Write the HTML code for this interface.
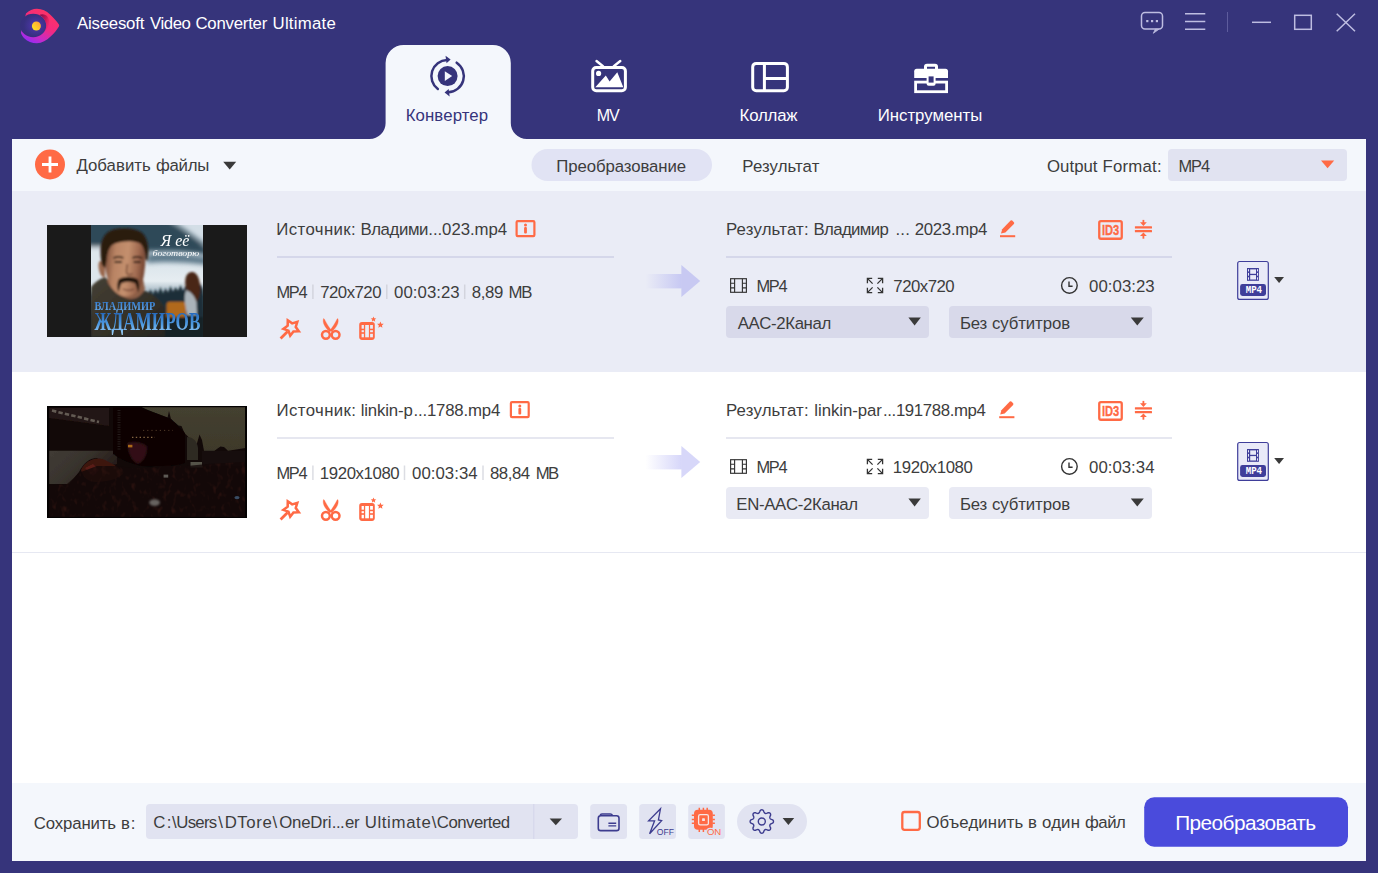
<!DOCTYPE html>
<html lang="ru">
<head>
<meta charset="utf-8">
<title>Aiseesoft Video Converter Ultimate</title>
<style>
*{box-sizing:border-box;margin:0;padding:0}
html,body{width:1378px;height:873px;overflow:hidden;background:#36347b}
body{font-family:"Liberation Sans", sans-serif;font-size:16.8px;color:#3d3d3d;position:relative}
.t{position:absolute;white-space:nowrap;line-height:20px;height:20px}
.b{position:absolute}
#art{position:absolute;left:0;top:0;width:1378px;height:873px}
svg text{font-family:"Liberation Sans", sans-serif}
</style>
</head>
<body>
<div class="b" style="left:12px;top:139px;width:1354px;height:722px;background:#fff"></div>
<div class="b" style="left:12px;top:139px;width:1354px;height:52px;background:#f4f7fc"></div>
<div class="b" style="left:12px;top:191px;width:1354px;height:181px;background:#eaecf6"></div>
<div class="b" style="left:12px;top:552px;width:1354px;height:1px;background:#e6e8f2"></div>
<div class="b" style="left:12px;top:783px;width:1354px;height:78px;background:#f4f7fc"></div>
<svg id="art" width="1378" height="873" viewBox="0 0 1378 873">
<defs>
<linearGradient id="lgA" x1="0.75" y1="0" x2="0.15" y2="1"><stop offset="0" stop-color="#ff3560"/><stop offset="0.45" stop-color="#f32a80"/><stop offset="0.75" stop-color="#c62bc8"/><stop offset="1" stop-color="#8a2bff"/></linearGradient>
<linearGradient id="lgD" x1="0" y1="0" x2="1" y2="0.6"><stop offset="0" stop-color="#6a0a4c"/><stop offset="0.6" stop-color="#b8104e" stop-opacity="0.75"/><stop offset="1" stop-color="#e01a5a" stop-opacity="0.1"/></linearGradient>
<radialGradient id="lgB" cx="0.6" cy="0.5" r="0.62"><stop offset="0" stop-color="#5b3cb4"/><stop offset="0.35" stop-color="#45349a"/><stop offset="0.75" stop-color="#37307f"/><stop offset="1" stop-color="#352f7c"/></radialGradient>
<linearGradient id="lgC" x1="1" y1="0" x2="0" y2="1"><stop offset="0" stop-color="#ff9a3a"/><stop offset="1" stop-color="#ffee20"/></linearGradient>
<linearGradient id="arr" x1="0" y1="0" x2="1" y2="0"><stop offset="0" stop-color="#6e6eeb" stop-opacity="0"/><stop offset="1" stop-color="#6e6eeb" stop-opacity="0.28"/></linearGradient>
<linearGradient id="sky" x1="0" y1="0" x2="0" y2="1"><stop offset="0" stop-color="#3d5668"/><stop offset="0.3" stop-color="#8fa6b6"/><stop offset="0.5" stop-color="#dfe8ee"/><stop offset="0.62" stop-color="#a9bcc8"/><stop offset="0.75" stop-color="#2f4654"/><stop offset="1" stop-color="#1d2a33"/></linearGradient>
<linearGradient id="nm" x1="0" y1="0" x2="0" y2="1"><stop offset="0" stop-color="#2f7fd0"/><stop offset="1" stop-color="#9fd4ff"/></linearGradient>
<linearGradient id="skin" x1="0" y1="0" x2="1" y2="0"><stop offset="0" stop-color="#8d5a40"/><stop offset="0.45" stop-color="#c08a68"/><stop offset="1" stop-color="#9a6248"/></linearGradient>

<filter id="b1" x="-20%" y="-20%" width="140%" height="140%"><feGaussianBlur stdDeviation="1"/></filter>
<filter id="b2" x="-20%" y="-20%" width="140%" height="140%"><feGaussianBlur stdDeviation="2.4"/></filter>
<filter id="b05" x="-20%" y="-20%" width="140%" height="140%"><feGaussianBlur stdDeviation="0.5"/></filter>
<filter id="b03" x="-20%" y="-20%" width="140%" height="140%"><feGaussianBlur stdDeviation="0.35"/></filter>
<filter id="crowd" x="0" y="0" width="100%" height="100%" color-interpolation-filters="sRGB"><feTurbulence type="fractalNoise" baseFrequency="0.2 0.13" numOctaves="2" seed="7" result="n"/><feColorMatrix in="n" type="matrix" values="0 0 0 0 0.22  0 0 0 0 0.09  0 0 0 0 0.07  1.8 0 0 0 -0.98"/></filter>
<filter id="hairn" x="0" y="0" width="100%" height="100%" color-interpolation-filters="sRGB"><feTurbulence type="fractalNoise" baseFrequency="0.5 0.2" numOctaves="2" seed="3" result="n"/><feColorMatrix in="n" type="matrix" values="0 0 0 0 0.42  0 0 0 0 0.25  0 0 0 0 0.16  1.8 0 0 0 -0.8"/><feComposite in2="SourceGraphic" operator="in"/></filter>
<clipPath id="c1"><rect x="44.1" y="0" width="111.9" height="112"/></clipPath>
<clipPath id="c2"><rect x="2.2" y="1.2" width="195.8" height="109.6"/></clipPath>
<clipPath id="c3"><path d="M0 80 L20 78 L34 66 L50 60 L70 60 L84 62 L100 62 L120 60 L140 60 L160 58 L200 56 V112 H0Z"/></clipPath>
<linearGradient id="sk1" x1="0" y1="0" x2="0" y2="1"><stop offset="0" stop-color="#32505f"/><stop offset="0.17" stop-color="#3d5b6b"/><stop offset="0.25" stop-color="#b9c9d4"/><stop offset="0.31" stop-color="#d9e3ea"/><stop offset="0.5" stop-color="#e6edf1"/><stop offset="0.58" stop-color="#aebfca"/><stop offset="0.64" stop-color="#3a5563"/><stop offset="0.8" stop-color="#1f323c"/><stop offset="1" stop-color="#141c21"/></linearGradient>
<linearGradient id="nm1" x1="0" y1="0" x2="0" y2="1"><stop offset="0.15" stop-color="#2466ba"/><stop offset="0.6" stop-color="#4f9be2"/><stop offset="1" stop-color="#a8d6fb"/></linearGradient>
<linearGradient id="nm2" x1="0" y1="0" x2="0" y2="1"><stop offset="0.2" stop-color="#337cd0"/><stop offset="1" stop-color="#6fb0ec"/></linearGradient>
<linearGradient id="face" x1="0" y1="0" x2="1" y2="0.15"><stop offset="0" stop-color="#6f4230"/><stop offset="0.3" stop-color="#b98464"/><stop offset="0.6" stop-color="#c4906e"/><stop offset="0.85" stop-color="#a06a50"/><stop offset="1" stop-color="#7a4a36"/></linearGradient>
<linearGradient id="jack" x1="0" y1="0" x2="1" y2="1"><stop offset="0" stop-color="#453f33"/><stop offset="1" stop-color="#272520"/></linearGradient>
<linearGradient id="scr" x1="0" y1="0" x2="1" y2="0.5"><stop offset="0" stop-color="#403b35"/><stop offset="0.5" stop-color="#38332d"/><stop offset="1" stop-color="#241a17"/></linearGradient>
<linearGradient id="sky2" x1="0" y1="0" x2="0" y2="1"><stop offset="0" stop-color="#444030"/><stop offset="1" stop-color="#3e392b"/></linearGradient>
</defs>
<path d="M369.6 139 A16 16 0 0 0 385.6 123 V63 A18 18 0 0 1 403.6 45 H492.8 A18 18 0 0 1 510.8 63 V123 A16 16 0 0 0 526.8 139 Z" fill="#f4f7fc"/>
<g>
<path d="M26 13.4 C29 10.5 33 8.7 36.9 8.7 C42 8.7 46.5 11 49.8 14.2 C53.6 17.8 57.2 21.6 58.9 24.4 Q59.5 25.4 58.9 26.4 C57 29.8 53.8 33.6 50.6 36.6 C46.5 40.6 42 43.2 36.9 43.2 C32 43.2 27.5 41.5 24.5 38.5 C22.8 36.8 21.5 34.8 20.9 32.7 Z" fill="url(#lgA)"/>
<ellipse cx="33.2" cy="25.5" rx="13" ry="11.8" fill="url(#lgB)"/>
<path d="M39.4 15.1 A13 11.8 0 0 1 44.4 31.6 C48.6 28.4 51 22 47.8 17 C45.8 14.2 42 13.6 39.4 15.1Z" fill="url(#lgD)"/>
<circle cx="36.4" cy="26" r="4.5" fill="url(#lgC)"/>
</g>
<g fill="none" stroke="#bebde1" stroke-width="1.5">
<rect x="1141.5" y="12.5" width="21" height="16.5" rx="3.5"/>
<path d="M1185 13.8H1205.3M1185 21.6H1205.3M1185 29.2H1205.3"/>
<path d="M1252 22.3H1271"/>
<rect x="1294.7" y="15.3" width="16.6" height="14"/>
<path d="M1336.7 13.7L1355 31.2M1355 13.7L1336.7 31.2"/>
</g>
<path d="M1159 29.2L1153.3 33.3L1155.3 29.2Z" fill="#bebde1" stroke="#bebde1" stroke-width="0.8"/>
<g fill="#bebde1"><rect x="1146.2" y="20" width="2.2" height="2.2"/><rect x="1151" y="20" width="2.2" height="2.2"/><rect x="1155.8" y="20" width="2.2" height="2.2"/></g>
<rect x="1227" y="12" width="1" height="20" fill="#5e5c9d"/>
<g fill="none" stroke="#36347b" stroke-width="2.5" stroke-linecap="round">
<path d="M437.85 89.04 A16.2 16.2 0 0 1 447.03 59.91"/>
<path d="M456.66 62.67 A16.2 16.2 0 0 1 448.17 92.29"/>
</g>
<path d="M445.53 55.71 L450.63 59.61 L446.53 63.31Z" fill="#36347b"/>
<path d="M449.67 96.49 L444.57 92.59 L448.67 88.89Z" fill="#36347b"/>
<circle cx="447.6" cy="76.1" r="10" fill="#36347b"/>
<path d="M444.8 71.3 L452.20000000000005 76.1 L444.8 80.89999999999999Z" fill="#f4f7fc"/>
<g fill="none" stroke="#fff">
<rect x="592.7" y="67.5" width="32.7" height="23.2" rx="3.5" stroke-width="3"/>
<path d="M596.5 61L603 66.3M620.3 61L613.8 66.3" stroke-width="2.4" stroke-linecap="round"/>
</g>
<circle cx="598.6" cy="73.4" r="2.6" fill="#fff"/>
<path d="M595.3 87.2L605.8 75.6L609.6 81.4L617.3 72.3L623.3 87.2Z" fill="#fff"/>
<g fill="none" stroke="#fff" stroke-width="3">
<rect x="752.7" y="63.4" width="34.7" height="27.3" rx="3.5"/>
<path d="M764.4 63.4V90.7M764.4 78.4H787.4"/>
</g>
<g>
<path d="M925.5 70 V66.6 Q925.5 65.2 927 65.2 H935 Q936.5 65.2 936.5 66.6 V70" fill="none" stroke="#fff" stroke-width="3"/>
<path d="M914.2 71.3 Q914.2 68.8 916.7 68.8 H945.5 Q948 68.8 948 71.3 V78 H914.2Z" fill="#fff"/>
<rect x="915.6" y="82.1" width="31" height="9.6" fill="none" stroke="#fff" stroke-width="2.8"/>
<rect x="926.6" y="75.4" width="9" height="10.4" rx="2" fill="#fff"/>
<rect x="928.6" y="76.4" width="5" height="6.2" fill="#36347b"/>
</g>
<circle cx="50" cy="164.5" r="15" fill="#ff6a45"/><path d="M42 164.5H58M50 156.5V172.5" stroke="#fff" stroke-width="2.8"/>
<path d="M223.2 161.8H236.2L229.7 169.4Z" fill="#3a3a3a"/>
<rect x="531.5" y="149" width="180.5" height="32" rx="16" fill="#e1e3f4" />
<rect x="1168" y="149" width="179" height="32" rx="4" fill="#e1e3f1" />
<path d="M1321 160.6H1334.2L1327.6 168.3Z" fill="#ff6a45"/>
<rect x="277" y="256" width="337" height="2" rx="0" fill="#d5d7ea" />
<rect x="726" y="256" width="446" height="2" rx="0" fill="#d5d7ea" />
<g transform="translate(0,0)"><rect x="645.5" y="274" width="35.9" height="14.4" fill="url(#arr)"/><path d="M681.4 265L700.2 281L681.4 297Z" fill="#6e6eeb" fill-opacity="0.28"/></g>
<polygon points="298.81,331.32 293.45,331.43 290.22,335.70 288.46,330.64 283.40,328.88 287.67,325.65 287.78,320.29 292.17,323.35 297.30,321.80 295.75,326.93" fill="none" stroke="#ff6a45" stroke-width="2.55" stroke-linejoin="miter"/>
<path d="M280.6 338.5L287.6 331.5" stroke="#ff6a45" stroke-width="2.7" stroke-linecap="butt"/>
<g transform="translate(0,0)" fill="none" stroke="#ff6a45">
<circle cx="325.9" cy="334.8" r="3.9" stroke-width="2.5"/><circle cx="335.6" cy="334.8" r="3.9" stroke-width="2.5"/>
<path d="M323.5 318.6 C322.3 322.4 324.4 327.2 329.7 331.7 L331.5 330.6 C328.8 327 326.2 323 324.3 319Z" fill="#ff6a45" stroke-width="0.3"/>
<path d="M337.9 318.6 C339.1 322.4 337 327.2 331.7 331.7 L329.9 330.6 C332.6 327 335.2 323 337.1 319Z" fill="#ff6a45" stroke-width="0.3"/>
</g>
<g transform="translate(0,0)"><rect x="359.2" y="322.1" width="15.6" height="17.8" rx="2.8" fill="#ff6a45"/><rect x="365.2" y="325" width="3.7" height="12.3" fill="#eaecf6"/><rect x="361.6" y="325" width="2.3" height="3.7" fill="#eaecf6"/><rect x="370.1" y="325" width="2.8" height="3.7" fill="#eaecf6"/><rect x="361.6" y="330.2" width="2.3" height="2" fill="#eaecf6"/><rect x="370.1" y="330.2" width="2.8" height="2" fill="#eaecf6"/><rect x="361.6" y="333.8" width="2.3" height="3.5" fill="#eaecf6"/><rect x="370.1" y="333.8" width="2.8" height="3.5" fill="#eaecf6"/><polygon points="373.50,316.40 374.27,318.24 376.26,318.40 374.74,319.70 375.20,321.65 373.50,320.61 371.80,321.65 372.26,319.70 370.74,318.40 372.73,318.24" fill="#ff6a45"/><polygon points="380.40,321.40 381.33,323.63 383.73,323.82 381.90,325.39 382.46,327.73 380.40,326.47 378.34,327.73 378.90,325.39 377.07,323.82 379.47,323.63" fill="#ff6a45"/></g>
<g transform="translate(0,0)"><rect x="516.6" y="221.1" width="17.8" height="15" rx="1.1" fill="none" stroke="#ff6a45" stroke-width="2.2"/><rect x="524.1" y="227" width="2.8" height="6.6" rx="1" fill="#ff6a45"/><circle cx="525.5" cy="225" r="1.5" fill="#ff6a45"/></g>
<g transform="translate(0,0)" fill="#ff6a45"><rect x="1000" y="235.2" width="15.2" height="2"/><path d="M1001 233.6L1002.2 229.3L1010.6 220.6Q1011.4 219.9 1012.2 220.6L1013.9 222.3Q1014.6 223.1 1013.9 223.9L1005.4 232.5Z"/></g>
<g transform="translate(0,0)"><rect x="1099.25" y="221.05" width="22.5" height="17.7" rx="1.7" fill="none" stroke="#ff6a45" stroke-width="2.3"/><text x="1101.9" y="234.9" font-size="14.4" font-weight="bold" fill="#ff6a45" stroke="#ff6a45" stroke-width="0.35" textLength="17.3" lengthAdjust="spacingAndGlyphs">ID3</text></g>
<g transform="translate(0,0)" fill="#ff6a45"><rect x="1134.9" y="226.25" width="17.1" height="2.2" rx="0.5"/><rect x="1134.9" y="229.95" width="17.1" height="2.2" rx="0.5"/><rect x="1142.5" y="219.9" width="1.8" height="4"/><path d="M1140 222.3H1146.8L1143.4 225.9Z"/><rect x="1142.5" y="234.6" width="1.8" height="4.1"/><path d="M1140 236H1146.8L1143.4 232.4Z"/></g>
<g transform="translate(0,0)" fill="none" stroke="#333" stroke-width="1.15"><rect x="730.6" y="278.7" width="15.8" height="13.6"/><path d="M734.6 278.7V292.3M742.4 278.7V292.3M730.6 283.2H734.6M730.6 287.8H734.6M742.4 283.2H746.4M742.4 287.8H746.4"/></g>
<g transform="translate(0,0)" fill="none" stroke="#333" stroke-width="1.3"><path d="M867.4 283.2V278.4H872.2M867.4 278.4L872.6 283.6M877.8 278.4H882.6V283.2M882.6 278.4L877.4 283.6M867.4 287.8V292.6H872.2M867.4 292.6L872.6 287.4M877.8 292.6H882.6V287.8M882.6 292.6L877.4 287.4"/></g>
<g transform="translate(0,0)" fill="none" stroke="#333" stroke-width="1.4"><circle cx="1069.4" cy="285.4" r="7.8"/><path d="M1069 281.6V286.3H1072.6"/></g>
<rect x="726" y="306" width="203" height="32" rx="4" fill="#d8d9ea" />
<rect x="949" y="306" width="203" height="32" rx="4" fill="#d8d9ea" />
<path d="M908.4 317.6H920.8L914.5999999999999 325.4Z" fill="#3a3a3a"/>
<path d="M1130.8 317.6H1143.8L1137.3 325.4Z" fill="#3a3a3a"/>
<g transform="translate(0,0)">
<rect x="1237.7" y="261.5" width="30.6" height="37.9" rx="2" fill="#e9eaf8" stroke="#3f3e9a" stroke-width="1.2"/>
<rect x="1240.1" y="284.1" width="25.9" height="11.8" rx="2.4" fill="#3f3e9a"/>
<rect x="1247" y="268" width="11.9" height="12.8" fill="#3f3e9a"/>
<rect x="1250.2" y="269.4" width="5.8" height="4.4" fill="#e9eaf8"/><rect x="1250.2" y="275.1" width="5.8" height="4.4" fill="#e9eaf8"/><rect x="1248" y="269.2" width="1" height="2.2" fill="#e9eaf8"/><rect x="1257" y="269.2" width="1" height="2.2" fill="#e9eaf8"/><rect x="1248" y="272.9" width="1" height="2.8" fill="#e9eaf8"/><rect x="1257" y="272.9" width="1" height="2.8" fill="#e9eaf8"/><rect x="1248" y="277.3" width="1" height="2.4" fill="#e9eaf8"/><rect x="1257" y="277.3" width="1" height="2.4" fill="#e9eaf8"/>
<text x="1253.9" y="293.1" text-anchor="middle" font-size="10.4" font-weight="bold" fill="#fff" style="font-family:'Liberation Mono',monospace" textLength="16.4" lengthAdjust="spacingAndGlyphs">MP4</text>
</g>
<path d="M1274.2 277.1H1284L1279.1 283.1Z" fill="#3a3a3a"/>
<rect x="277" y="437" width="337" height="2" rx="0" fill="#e6e7f0" />
<rect x="726" y="437" width="446" height="2" rx="0" fill="#e6e7f0" />
<g transform="translate(0,181)"><rect x="645.5" y="274" width="35.9" height="14.4" fill="url(#arr)"/><path d="M681.4 265L700.2 281L681.4 297Z" fill="#6e6eeb" fill-opacity="0.28"/></g>
<polygon points="298.81,512.32 293.45,512.43 290.22,516.70 288.46,511.64 283.40,509.88 287.67,506.65 287.78,501.29 292.17,504.35 297.30,502.80 295.75,507.93" fill="none" stroke="#ff6a45" stroke-width="2.55" stroke-linejoin="miter"/>
<path d="M280.6 519.5L287.6 512.5" stroke="#ff6a45" stroke-width="2.7" stroke-linecap="butt"/>
<g transform="translate(0,181)" fill="none" stroke="#ff6a45">
<circle cx="325.9" cy="334.8" r="3.9" stroke-width="2.5"/><circle cx="335.6" cy="334.8" r="3.9" stroke-width="2.5"/>
<path d="M323.5 318.6 C322.3 322.4 324.4 327.2 329.7 331.7 L331.5 330.6 C328.8 327 326.2 323 324.3 319Z" fill="#ff6a45" stroke-width="0.3"/>
<path d="M337.9 318.6 C339.1 322.4 337 327.2 331.7 331.7 L329.9 330.6 C332.6 327 335.2 323 337.1 319Z" fill="#ff6a45" stroke-width="0.3"/>
</g>
<g transform="translate(0,181)"><rect x="359.2" y="322.1" width="15.6" height="17.8" rx="2.8" fill="#ff6a45"/><rect x="365.2" y="325" width="3.7" height="12.3" fill="#ffffff"/><rect x="361.6" y="325" width="2.3" height="3.7" fill="#ffffff"/><rect x="370.1" y="325" width="2.8" height="3.7" fill="#ffffff"/><rect x="361.6" y="330.2" width="2.3" height="2" fill="#ffffff"/><rect x="370.1" y="330.2" width="2.8" height="2" fill="#ffffff"/><rect x="361.6" y="333.8" width="2.3" height="3.5" fill="#ffffff"/><rect x="370.1" y="333.8" width="2.8" height="3.5" fill="#ffffff"/><polygon points="373.50,316.40 374.27,318.24 376.26,318.40 374.74,319.70 375.20,321.65 373.50,320.61 371.80,321.65 372.26,319.70 370.74,318.40 372.73,318.24" fill="#ff6a45"/><polygon points="380.40,321.40 381.33,323.63 383.73,323.82 381.90,325.39 382.46,327.73 380.40,326.47 378.34,327.73 378.90,325.39 377.07,323.82 379.47,323.63" fill="#ff6a45"/></g>
<g transform="translate(0,181)"><rect x="510.90000000000003" y="221.1" width="17.8" height="15" rx="1.1" fill="none" stroke="#ff6a45" stroke-width="2.2"/><rect x="518.4" y="227" width="2.8" height="6.6" rx="1" fill="#ff6a45"/><circle cx="519.8" cy="225" r="1.5" fill="#ff6a45"/></g>
<g transform="translate(-0.7999999999999545,181)" fill="#ff6a45"><rect x="1000" y="235.2" width="15.2" height="2"/><path d="M1001 233.6L1002.2 229.3L1010.6 220.6Q1011.4 219.9 1012.2 220.6L1013.9 222.3Q1014.6 223.1 1013.9 223.9L1005.4 232.5Z"/></g>
<g transform="translate(0,181)"><rect x="1099.25" y="221.05" width="22.5" height="17.7" rx="1.7" fill="none" stroke="#ff6a45" stroke-width="2.3"/><text x="1101.9" y="234.9" font-size="14.4" font-weight="bold" fill="#ff6a45" stroke="#ff6a45" stroke-width="0.35" textLength="17.3" lengthAdjust="spacingAndGlyphs">ID3</text></g>
<g transform="translate(0,181)" fill="#ff6a45"><rect x="1134.9" y="226.25" width="17.1" height="2.2" rx="0.5"/><rect x="1134.9" y="229.95" width="17.1" height="2.2" rx="0.5"/><rect x="1142.5" y="219.9" width="1.8" height="4"/><path d="M1140 222.3H1146.8L1143.4 225.9Z"/><rect x="1142.5" y="234.6" width="1.8" height="4.1"/><path d="M1140 236H1146.8L1143.4 232.4Z"/></g>
<g transform="translate(0,181)" fill="none" stroke="#333" stroke-width="1.15"><rect x="730.6" y="278.7" width="15.8" height="13.6"/><path d="M734.6 278.7V292.3M742.4 278.7V292.3M730.6 283.2H734.6M730.6 287.8H734.6M742.4 283.2H746.4M742.4 287.8H746.4"/></g>
<g transform="translate(0,181)" fill="none" stroke="#333" stroke-width="1.3"><path d="M867.4 283.2V278.4H872.2M867.4 278.4L872.6 283.6M877.8 278.4H882.6V283.2M882.6 278.4L877.4 283.6M867.4 287.8V292.6H872.2M867.4 292.6L872.6 287.4M877.8 292.6H882.6V287.8M882.6 292.6L877.4 287.4"/></g>
<g transform="translate(0,181)" fill="none" stroke="#333" stroke-width="1.4"><circle cx="1069.4" cy="285.4" r="7.8"/><path d="M1069 281.6V286.3H1072.6"/></g>
<rect x="726" y="487" width="203" height="32" rx="4" fill="#e9eaf4" />
<rect x="949" y="487" width="203" height="32" rx="4" fill="#e9eaf4" />
<path d="M908.4 498.6H920.8L914.5999999999999 506.4Z" fill="#3a3a3a"/>
<path d="M1130.8 498.6H1143.8L1137.3 506.4Z" fill="#3a3a3a"/>
<g transform="translate(0,181)">
<rect x="1237.7" y="261.5" width="30.6" height="37.9" rx="2" fill="#e9eaf8" stroke="#3f3e9a" stroke-width="1.2"/>
<rect x="1240.1" y="284.1" width="25.9" height="11.8" rx="2.4" fill="#3f3e9a"/>
<rect x="1247" y="268" width="11.9" height="12.8" fill="#3f3e9a"/>
<rect x="1250.2" y="269.4" width="5.8" height="4.4" fill="#e9eaf8"/><rect x="1250.2" y="275.1" width="5.8" height="4.4" fill="#e9eaf8"/><rect x="1248" y="269.2" width="1" height="2.2" fill="#e9eaf8"/><rect x="1257" y="269.2" width="1" height="2.2" fill="#e9eaf8"/><rect x="1248" y="272.9" width="1" height="2.8" fill="#e9eaf8"/><rect x="1257" y="272.9" width="1" height="2.8" fill="#e9eaf8"/><rect x="1248" y="277.3" width="1" height="2.4" fill="#e9eaf8"/><rect x="1257" y="277.3" width="1" height="2.4" fill="#e9eaf8"/>
<text x="1253.9" y="293.1" text-anchor="middle" font-size="10.4" font-weight="bold" fill="#fff" style="font-family:'Liberation Mono',monospace" textLength="16.4" lengthAdjust="spacingAndGlyphs">MP4</text>
</g>
<path d="M1274.2 458.1H1284L1279.1 464.1Z" fill="#3a3a3a"/>
<rect x="312.15" y="284.5" width="1.5" height="14.5" rx="0" fill="#d3d4dd" />
<rect x="386.05" y="284.5" width="1.5" height="14.5" rx="0" fill="#d3d4dd" />
<rect x="463.95" y="284.5" width="1.5" height="14.5" rx="0" fill="#d3d4dd" />
<rect x="312.15" y="465.5" width="1.5" height="14.5" rx="0" fill="#dcdde3" />
<rect x="403.75" y="465.5" width="1.5" height="14.5" rx="0" fill="#dcdde3" />
<rect x="482.25" y="465.5" width="1.5" height="14.5" rx="0" fill="#dcdde3" />
<g transform="translate(47,225)">
<rect x="0" y="0" width="200" height="112" fill="#1a1a1a"/>
<g clip-path="url(#c1)">
<rect x="44" y="0" width="113" height="112" fill="url(#sk1)"/>
<g filter="url(#b2)">
<path d="M118 -8 H164 V24 C152 14 138 4 118 -8Z" fill="#d3dee6"/>
<path d="M40 -8 H104 C120 -4 136 6 150 16 L162 26 V30 C146 26 128 24 110 25 H40Z" fill="#2d4959"/>
<path d="M100 30 C118 27 140 29 162 33 V40 C140 37 118 36 100 38Z" fill="#587586"/>
<path d="M40 22 H58 V64 H40Z" fill="#dde6ec"/>
</g>
<g filter="url(#b1)">
<path d="M96 72 l2.5 -6 l2.5 5 l2.5 -7 l2.5 6 l2.5 -6 l2.5 5 l2.5 -7 l2.5 7 l2.5 -6 l2.5 5 l2.5 -7 l2.5 6 l2.5 -5 l2.5 4 l2.5 -6 l2.5 6 l2.5 -5 l2.5 5 l2.5 -7 l2.5 6 l2.5 -5 l2.5 5 l2.5 -6 l2.5 6 V96 H96Z" fill="#1c2e37"/>
<rect x="44" y="92" width="113" height="21" fill="#172128"/>
<path d="M44 112 V62 C47 58 52 54 58 52 L66 60 L92 64 L98 66 C108 70 114 76 117 82 C119 90 118 100 118 112Z" fill="url(#jack)"/>
<path d="M60 56 C64 66 76 74 84 74 C90 74 95 70 98 64 L96 54 H62Z" fill="#8d5e46"/>
<path d="M53.5 36 C51.5 36 51 40 52 45 C53 50 55.5 53 58 52 V36Z" fill="#9a684e"/>
<path d="M58 40 C57 26 60 16 68 13 C78 10 90 12 95 18 C99 26 99 36 97.5 46 C96.5 56 93 66 86 70 C82 72 77 72 72 69.5 C64 65 59 54 58 40Z" fill="url(#face)"/>
<path d="M55 40 C52 26 53 12 62 6.5 C70 2 86 2 94 7 C101 12 102.5 24 100.5 36 L98.5 34 C98.5 26 96 19 91 17.5 C83 15.5 72 16 65 20 C61 24 60 30 59.5 36 L58 43 Z" fill="#2a1a10"/>
<path d="M71.5 54.5 C76 50.8 86 50.8 91 54.5 C92.6 58 92.6 63 91.4 67.5 L88.4 58.5 C84 56.6 78.4 56.6 74 58.5 L71.4 67.5 C70 63 70 58 71.5 54.5Z" fill="#23150d"/>
<path d="M66.5 33.2 C69.5 31.6 73.5 31.6 76.4 33 M85.4 33 C88.4 31.6 92 31.6 95 33.2" stroke="#2c1a10" stroke-width="1.7" fill="none"/>
<path d="M67.6 37 H75 M86.6 37 H93.6" stroke="#24160e" stroke-width="1.9" fill="none"/>
<path d="M80.4 39 C79.6 44 78.8 46.8 80 48.8 C82 50 84.4 49.6 85.6 48.6" stroke="#7a4c38" stroke-width="1.5" fill="none"/>
<path d="M76 64 C79 65.4 84 65.4 87 64" stroke="#6a3a2c" stroke-width="1.3" fill="none"/>
<path d="M119.5 80 C119.5 78 121 76.8 123 76.8 H136 C138 76.8 139 78 139 80 V92 H119.5Z" fill="#b0691c"/>
<path d="M138 78 C137 70 139 64 141 62 L149 62 L150 90 H140Z" fill="#aab3ba"/>
<path d="M138.4 60 C137.6 52 140 47 145 47 C150.6 47 153.4 55 153.2 64 C153 71 151.4 75 149.4 77 C148 72 144 66 140 66 C139 64 138.6 62 138.4 60Z" fill="#4a2818"/>
</g>
<g filter="url(#b03)">
<text x="113.8" y="21.2" font-size="17.5" font-style="italic" fill="#fff" style="font-family:'Liberation Serif',serif" textLength="28.6" lengthAdjust="spacingAndGlyphs">Я её</text>
<text x="105.6" y="31.2" font-size="9" font-style="italic" fill="#fff" style="font-family:'Liberation Serif',serif" textLength="46.5" lengthAdjust="spacingAndGlyphs">боготворю</text>
<text x="47.6" y="84.9" font-size="12.6" font-weight="bold" fill="url(#nm2)" style="font-family:'Liberation Serif',serif" textLength="60.6" lengthAdjust="spacingAndGlyphs">ВЛАДИМИР</text>
<text x="47.4" y="105.2" font-size="24.6" font-weight="bold" fill="url(#nm1)" style="font-family:'Liberation Serif',serif" textLength="106" lengthAdjust="spacingAndGlyphs">ЖДАМИРОВ</text>
</g>
</g>
</g>
<g transform="translate(47,406)">
<rect x="0" y="0" width="200" height="112" fill="#040202"/>
<g clip-path="url(#c2)">
<rect x="0" y="0" width="200" height="112" fill="#120908"/>
<g filter="url(#b05)">
<path d="M92.7 0 H200 V41.8 L181 44.8 L177 41 L173.4 40.4 L167.4 44.8 H157 L155 34 L152.5 28.4 L149.5 38.9 L140.5 29.9 L137.5 26.9 L134.5 20 L131.5 19.4 L124 13 L122 5 L120.6 11.4 L101.6 4.5Z" fill="url(#sky2)"/>
<path d="M2 2 H62 L62 20 L2 12Z" fill="#241412"/>
<path d="M2 44.8 H70 V58 C62 60 56 56 50 52 C42 52 36 58 32 66 L22 78 H2Z" fill="url(#scr)"/>
<path d="M66 1 H93 L124 13 L138 27 V57 C130 60 118 60 108 60 C96 62 84 58 72 52 L66 48Z" fill="#0a0505"/>
<path d="M80 37 C86 35 96 36 100 40 C101 48 97 56 91 58 C85 56 81 48 80 37Z" fill="#3a0f12" filter="url(#b1)" opacity="0.8"/>
<path d="M140 31 C146 31 150 35 151 42 V54 H140Z" fill="#2e2923"/>
<path d="M143.5 56 H155.5 V61.5 H143.5Z" fill="#55524a"/>
<path d="M34 64 C38 54 50 50 58 54 C66 58 74 62 76 68 C70 74 58 76 48 76 C42 76 36 72 34 64Z" fill="#3c1510"/>
<path d="M38 62 L46 58 L52 64 L46 70Z" fill="#5a1c16"/>
<path d="M155 45 H198 V60 H155Z" fill="#170d0c"/>
</g>
<path d="M85 31.4 H108" stroke="#9a7a50" stroke-width="1.3" stroke-dasharray="1.4 2.4" opacity="0.85"/>
<path d="M96 24.4 H126" stroke="#6a5238" stroke-width="1" stroke-dasharray="1.2 3" opacity="0.7"/>
<path d="M5 4.6 L52 16" stroke="#8f897d" stroke-width="2.6" stroke-dasharray="4.4 2.2" opacity="0.6"/>
<path d="M72 4 V44" stroke="#2a2422" stroke-width="3" stroke-dasharray="1 1.4" opacity="0.8"/>
<path d="M81 38.8 H85.4 V41.4 H81Z" fill="#c8801e" opacity="0.8" filter="url(#b03)"/>
<g clip-path="url(#c3)"><rect x="0" y="50" width="200" height="62" fill="#130908" opacity="0.82"/><rect x="0" y="50" width="200" height="62" filter="url(#crowd)"/></g>
<ellipse cx="107.6" cy="96.6" rx="5.4" ry="3.4" fill="#8a8a86" opacity="0.7" filter="url(#b1)"/>
<rect x="116.6" y="68.6" width="4.6" height="3" fill="#7d7d76" opacity="0.7"/>
<ellipse cx="190" cy="91.6" rx="2.6" ry="1.6" fill="#4a6a8a" opacity="0.7"/>
</g>
</g>
<rect x="146" y="804" width="432" height="35" rx="4" fill="#e1e3f1" />
<rect x="533.3" y="804" width="1" height="35" rx="0" fill="#d3d5ea" />
<path d="M549.6 818.4H562L555.8 825.2Z" fill="#3a3a3a"/>
<rect x="590.2" y="804" width="36.8" height="35" rx="3.5" fill="#e1e3f1" />
<rect x="639.2" y="804" width="36.8" height="35" rx="3.5" fill="#e1e3f1" />
<rect x="688.2" y="804" width="36.7" height="35" rx="3.5" fill="#e1e3f1" />
<rect x="737" y="804" width="70" height="35" rx="17.5" fill="#e1e3f1" />
<path d="M782.6 818.1H794.2L788.4000000000001 825.1Z" fill="#3a3a3a"/>
<g fill="none" stroke="#3d3c8f" stroke-width="1.6"><rect x="598.3" y="815.8" width="20.7" height="14.8" rx="2.4"/><path d="M600 815.6 Q600.4 813.9 602 813.9 H610.4 Q611.8 813.9 612.6 815.6" stroke-width="1.5"/><path d="M608.4 823.2H616.2M608.4 825.9H616.2" stroke-width="1.4"/></g>
<path d="M660.5 808.8L648.6 820.8H654.6L649.6 833.8L661.6 820.6L658.4 820Z" fill="none" stroke="#3d3c8f" stroke-width="1.3" stroke-linejoin="miter"/>
<text x="656.7" y="834.8" font-size="9.3" fill="#3d3c8f" textLength="17.2" lengthAdjust="spacingAndGlyphs">OFF</text>
<g><path d="M699.3 807.8V810.5M699.3 829V832M691.8 815.3H694.5M712.4 815.3H714.9M703.4 807.8V810.5M703.4 829V832M691.8 819.4H694.5M712.4 819.4H714.9M707.1999999999999 807.8V810.5M707.1999999999999 829V832M691.8 823.1999999999999H694.5M712.4 823.1999999999999H714.9" stroke="#ff6a45" stroke-width="1.5" fill="none"/><rect x="694" y="809.8" width="18.8" height="19.9" rx="3.8" fill="#ff6a45"/><rect x="698.6" y="814.6" width="9.8" height="10.2" rx="1.6" fill="none" stroke="#f7e6e6" stroke-width="1.3"/><rect x="702.1" y="818.3" width="2.8" height="2.8" rx="0.6" fill="#f7e6e6"/></g>
<text x="706.9" y="835.1" font-size="9.6" fill="#ff6a45" stroke="#e1e3f1" stroke-width="2.6" stroke-linejoin="round" paint-order="stroke" textLength="14.4" lengthAdjust="spacingAndGlyphs">ON</text>
<g fill="none" stroke="#3d3c8f" stroke-width="1.4" stroke-linejoin="round"><path d="M773.50 821.50 L773.40 822.11 L773.08 822.69 L772.55 823.20 L771.53 823.57 L770.84 823.92 L770.36 824.28 L770.04 824.66 L769.86 825.09 L769.82 825.59 L769.90 826.18 L770.15 826.92 L770.61 827.90 L770.62 828.64 L770.43 829.27 L770.07 829.77 L769.57 830.13 L768.94 830.32 L768.20 830.31 L767.22 829.85 L766.48 829.60 L765.89 829.52 L765.39 829.56 L764.96 829.74 L764.58 830.06 L764.22 830.54 L763.87 831.23 L763.50 832.25 L762.99 832.78 L762.41 833.10 L761.80 833.20 L761.19 833.10 L760.61 832.78 L760.10 832.25 L759.73 831.23 L759.38 830.54 L759.02 830.06 L758.64 829.74 L758.21 829.56 L757.71 829.52 L757.12 829.60 L756.38 829.85 L755.40 830.31 L754.66 830.32 L754.03 830.13 L753.53 829.77 L753.17 829.27 L752.98 828.64 L752.99 827.90 L753.45 826.92 L753.70 826.18 L753.78 825.59 L753.74 825.09 L753.56 824.66 L753.24 824.28 L752.76 823.92 L752.07 823.57 L751.05 823.20 L750.52 822.69 L750.20 822.11 L750.10 821.50 L750.20 820.89 L750.52 820.31 L751.05 819.80 L752.07 819.43 L752.76 819.08 L753.24 818.72 L753.56 818.34 L753.74 817.91 L753.78 817.41 L753.70 816.82 L753.45 816.08 L752.99 815.10 L752.98 814.36 L753.17 813.73 L753.53 813.23 L754.03 812.87 L754.66 812.68 L755.40 812.69 L756.38 813.15 L757.12 813.40 L757.71 813.48 L758.21 813.44 L758.64 813.26 L759.02 812.94 L759.38 812.46 L759.73 811.77 L760.10 810.75 L760.61 810.22 L761.19 809.90 L761.80 809.80 L762.41 809.90 L762.99 810.22 L763.50 810.75 L763.87 811.77 L764.22 812.46 L764.58 812.94 L764.96 813.26 L765.39 813.44 L765.89 813.48 L766.48 813.40 L767.22 813.15 L768.20 812.69 L768.94 812.68 L769.57 812.87 L770.07 813.23 L770.43 813.73 L770.62 814.36 L770.61 815.10 L770.15 816.08 L769.90 816.82 L769.82 817.41 L769.86 817.91 L770.04 818.34 L770.36 818.72 L770.84 819.08 L771.53 819.43 L772.55 819.80 L773.08 820.31 L773.40 820.89Z"/><circle cx="761.8" cy="821.5" r="3.5"/></g>
<rect x="902.3" y="812" width="17.5" height="17.8" rx="2.2" fill="none" stroke="#ff6a45" stroke-width="2.3"/>
<rect x="1144.2" y="797.2" width="203.8" height="49.6" rx="10" fill="#4a4bdc" />
</svg>
<div class="t" style="left:76.90px;top:14px;color:#fff;"><span style="letter-spacing:-0.192px;">Aiseesoft</span> <span style="letter-spacing:-0.439px;margin-left:1.161px;">Video</span> <span style="letter-spacing:-0.225px;margin-left:0.324px;">Converter</span> <span style="letter-spacing:0.253px;margin-left:0.763px;">Ultimate</span></div>
<div class="t" style="left:405.66px;top:106px;color:#36347b;"><span style="letter-spacing:0.112px;">Конвертер</span></div>
<div class="t" style="left:596.82px;top:106px;font-size:16px;color:#fff;"><span style="letter-spacing:-1.168px;">MV</span></div>
<div class="t" style="left:739.56px;top:106px;color:#fff;"><span style="letter-spacing:-0.184px;">Коллаж</span></div>
<div class="t" style="left:877.66px;top:106px;color:#fff;"><span style="letter-spacing:0.005px;">Инструменты</span></div>
<div class="t" style="left:76.40px;top:156px;"><span style="letter-spacing:0.035px;">Добавить</span> <span style="letter-spacing:-0.250px;margin-left:0.437px;">файлы</span></div>
<div class="t" style="left:556.16px;top:157px;"><span style="letter-spacing:-0.078px;">Преобразование</span></div>
<div class="t" style="left:742.36px;top:157px;"><span style="letter-spacing:0.084px;">Результат</span></div>
<div class="t" style="left:1047.03px;top:157px;"><span style="letter-spacing:0.021px;">Output</span> <span style="letter-spacing:0.224px;margin-left:0.304px;">Format:</span></div>
<div class="t" style="left:1178.49px;top:156px;font-size:16.4px;"><span style="letter-spacing:-1.040px;">MP4</span></div>
<div class="t" style="left:276.36px;top:220px;"><span style="letter-spacing:0.379px;">Источник:</span> <span style="letter-spacing:-0.396px;margin-left:-0.366px;">Владими</span><span style="letter-spacing:-0.070px;margin-left:0.332px;">...023.mp4</span></div>
<div class="t" style="left:276.49px;top:282px;font-size:16.4px;"><span style="letter-spacing:-1.340px;">MP4</span></div>
<div class="t" style="left:320.16px;top:283px;"><span style="letter-spacing:-0.502px;">720x720</span></div>
<div class="t" style="left:394.10px;top:283px;"><span style="letter-spacing:0.031px;">00:03:23</span></div>
<div class="t" style="left:471.63px;top:283px;"><span style="letter-spacing:-0.283px;">8,89</span> <span style="letter-spacing:-1.167px;margin-left:0.596px;">MB</span></div>
<div class="t" style="left:725.96px;top:220px;"><span style="letter-spacing:0.183px;">Результат:</span> <span style="letter-spacing:-0.638px;margin-left:0.130px;">Владимир</span> <span style="letter-spacing:0.292px;margin-left:2.551px;">...</span> <span style="letter-spacing:-0.306px;margin-left:-0.176px;">2023.mp4</span></div>
<div class="t" style="left:756.39px;top:276px;font-size:16.4px;"><span style="letter-spacing:-1.190px;">MP4</span></div>
<div class="t" style="left:893.36px;top:277px;"><span style="letter-spacing:-0.519px;">720x720</span></div>
<div class="t" style="left:1089.10px;top:277px;"><span style="letter-spacing:0.031px;">00:03:23</span></div>
<div class="t" style="left:737.70px;top:314px;"><span style="letter-spacing:-0.374px;">AAC-2Канал</span></div>
<div class="t" style="left:959.96px;top:314px;"><span style="letter-spacing:-0.240px;">Без</span> <span style="letter-spacing:-0.104px;margin-left:0.421px;">субтитров</span></div>
<div class="t" style="left:276.56px;top:401px;"><span style="letter-spacing:0.392px;">Источник:</span> <span style="letter-spacing:-0.144px;margin-left:-0.443px;">linkin-p</span><span style="letter-spacing:-0.187px;margin-left:0.824px;">...1788.mp4</span></div>
<div class="t" style="left:276.49px;top:463px;font-size:16.4px;"><span style="letter-spacing:-1.340px;">MP4</span></div>
<div class="t" style="left:319.82px;top:464px;"><span style="letter-spacing:-0.395px;">1920x1080</span></div>
<div class="t" style="left:412.00px;top:464px;"><span style="letter-spacing:0.050px;">00:03:34</span></div>
<div class="t" style="left:489.93px;top:464px;"><span style="letter-spacing:-0.457px;">88,84</span> <span style="letter-spacing:-1.767px;margin-left:1.406px;">MB</span></div>
<div class="t" style="left:725.96px;top:401px;"><span style="letter-spacing:0.183px;">Результат:</span> <span style="letter-spacing:-0.048px;margin-left:0.866px;">linkin-par</span><span style="letter-spacing:-0.372px;margin-left:1.118px;">...191788.mp4</span></div>
<div class="t" style="left:756.39px;top:457px;font-size:16.4px;"><span style="letter-spacing:-1.190px;">MP4</span></div>
<div class="t" style="left:892.72px;top:458px;"><span style="letter-spacing:-0.358px;">1920x1080</span></div>
<div class="t" style="left:1089.10px;top:458px;"><span style="letter-spacing:0.007px;">00:03:34</span></div>
<div class="t" style="left:736.36px;top:495px;"><span style="letter-spacing:-0.338px;">EN-AAC-2Канал</span></div>
<div class="t" style="left:959.96px;top:495px;"><span style="letter-spacing:-0.240px;">Без</span> <span style="letter-spacing:-0.104px;margin-left:0.421px;">субтитров</span></div>
<div class="t" style="left:33.66px;top:814px;"><span style="letter-spacing:-0.119px;">Сохранить</span> <span style="letter-spacing:0.691px;margin-left:0.455px;">в:</span></div>
<div class="t" style="left:153.36px;top:813px;"><span style="letter-spacing:1.216px;">C:</span><span style="margin-left:-0.691px;">\</span><span style="letter-spacing:-0.748px;margin-left:-0.244px;">Users</span><span style="margin-left:1.844px;">\</span><span style="letter-spacing:0.584px;margin-left:1.688px;">DTore</span><span style="margin-left:0.308px;">\</span><span style="letter-spacing:-0.199px;margin-left:1.960px;">OneDri</span><span style="letter-spacing:-0.608px;margin-left:0.643px;">...</span><span style="letter-spacing:-0.247px;margin-left:0.960px;">er</span> <span style="letter-spacing:0.653px;margin-left:0.585px;">Ultimate</span><span style="margin-left:0.240px;">\</span><span style="letter-spacing:-0.528px;margin-left:0.492px;">Converted</span></div>
<div class="t" style="left:926.43px;top:813px;"><span style="letter-spacing:0.118px;">Объединить</span> <span style="margin-left:-0.082px;">в</span> <span style="letter-spacing:0.160px;margin-left:0.443px;">один</span> <span style="letter-spacing:-0.438px;margin-left:0.155px;">файл</span></div>
<div class="t" style="left:1175.14px;top:811px;font-size:20.8px;color:#fff;line-height:24px;height:24px;"><span style="letter-spacing:-0.551px;">Преобразовать</span></div>
</body>
</html>
